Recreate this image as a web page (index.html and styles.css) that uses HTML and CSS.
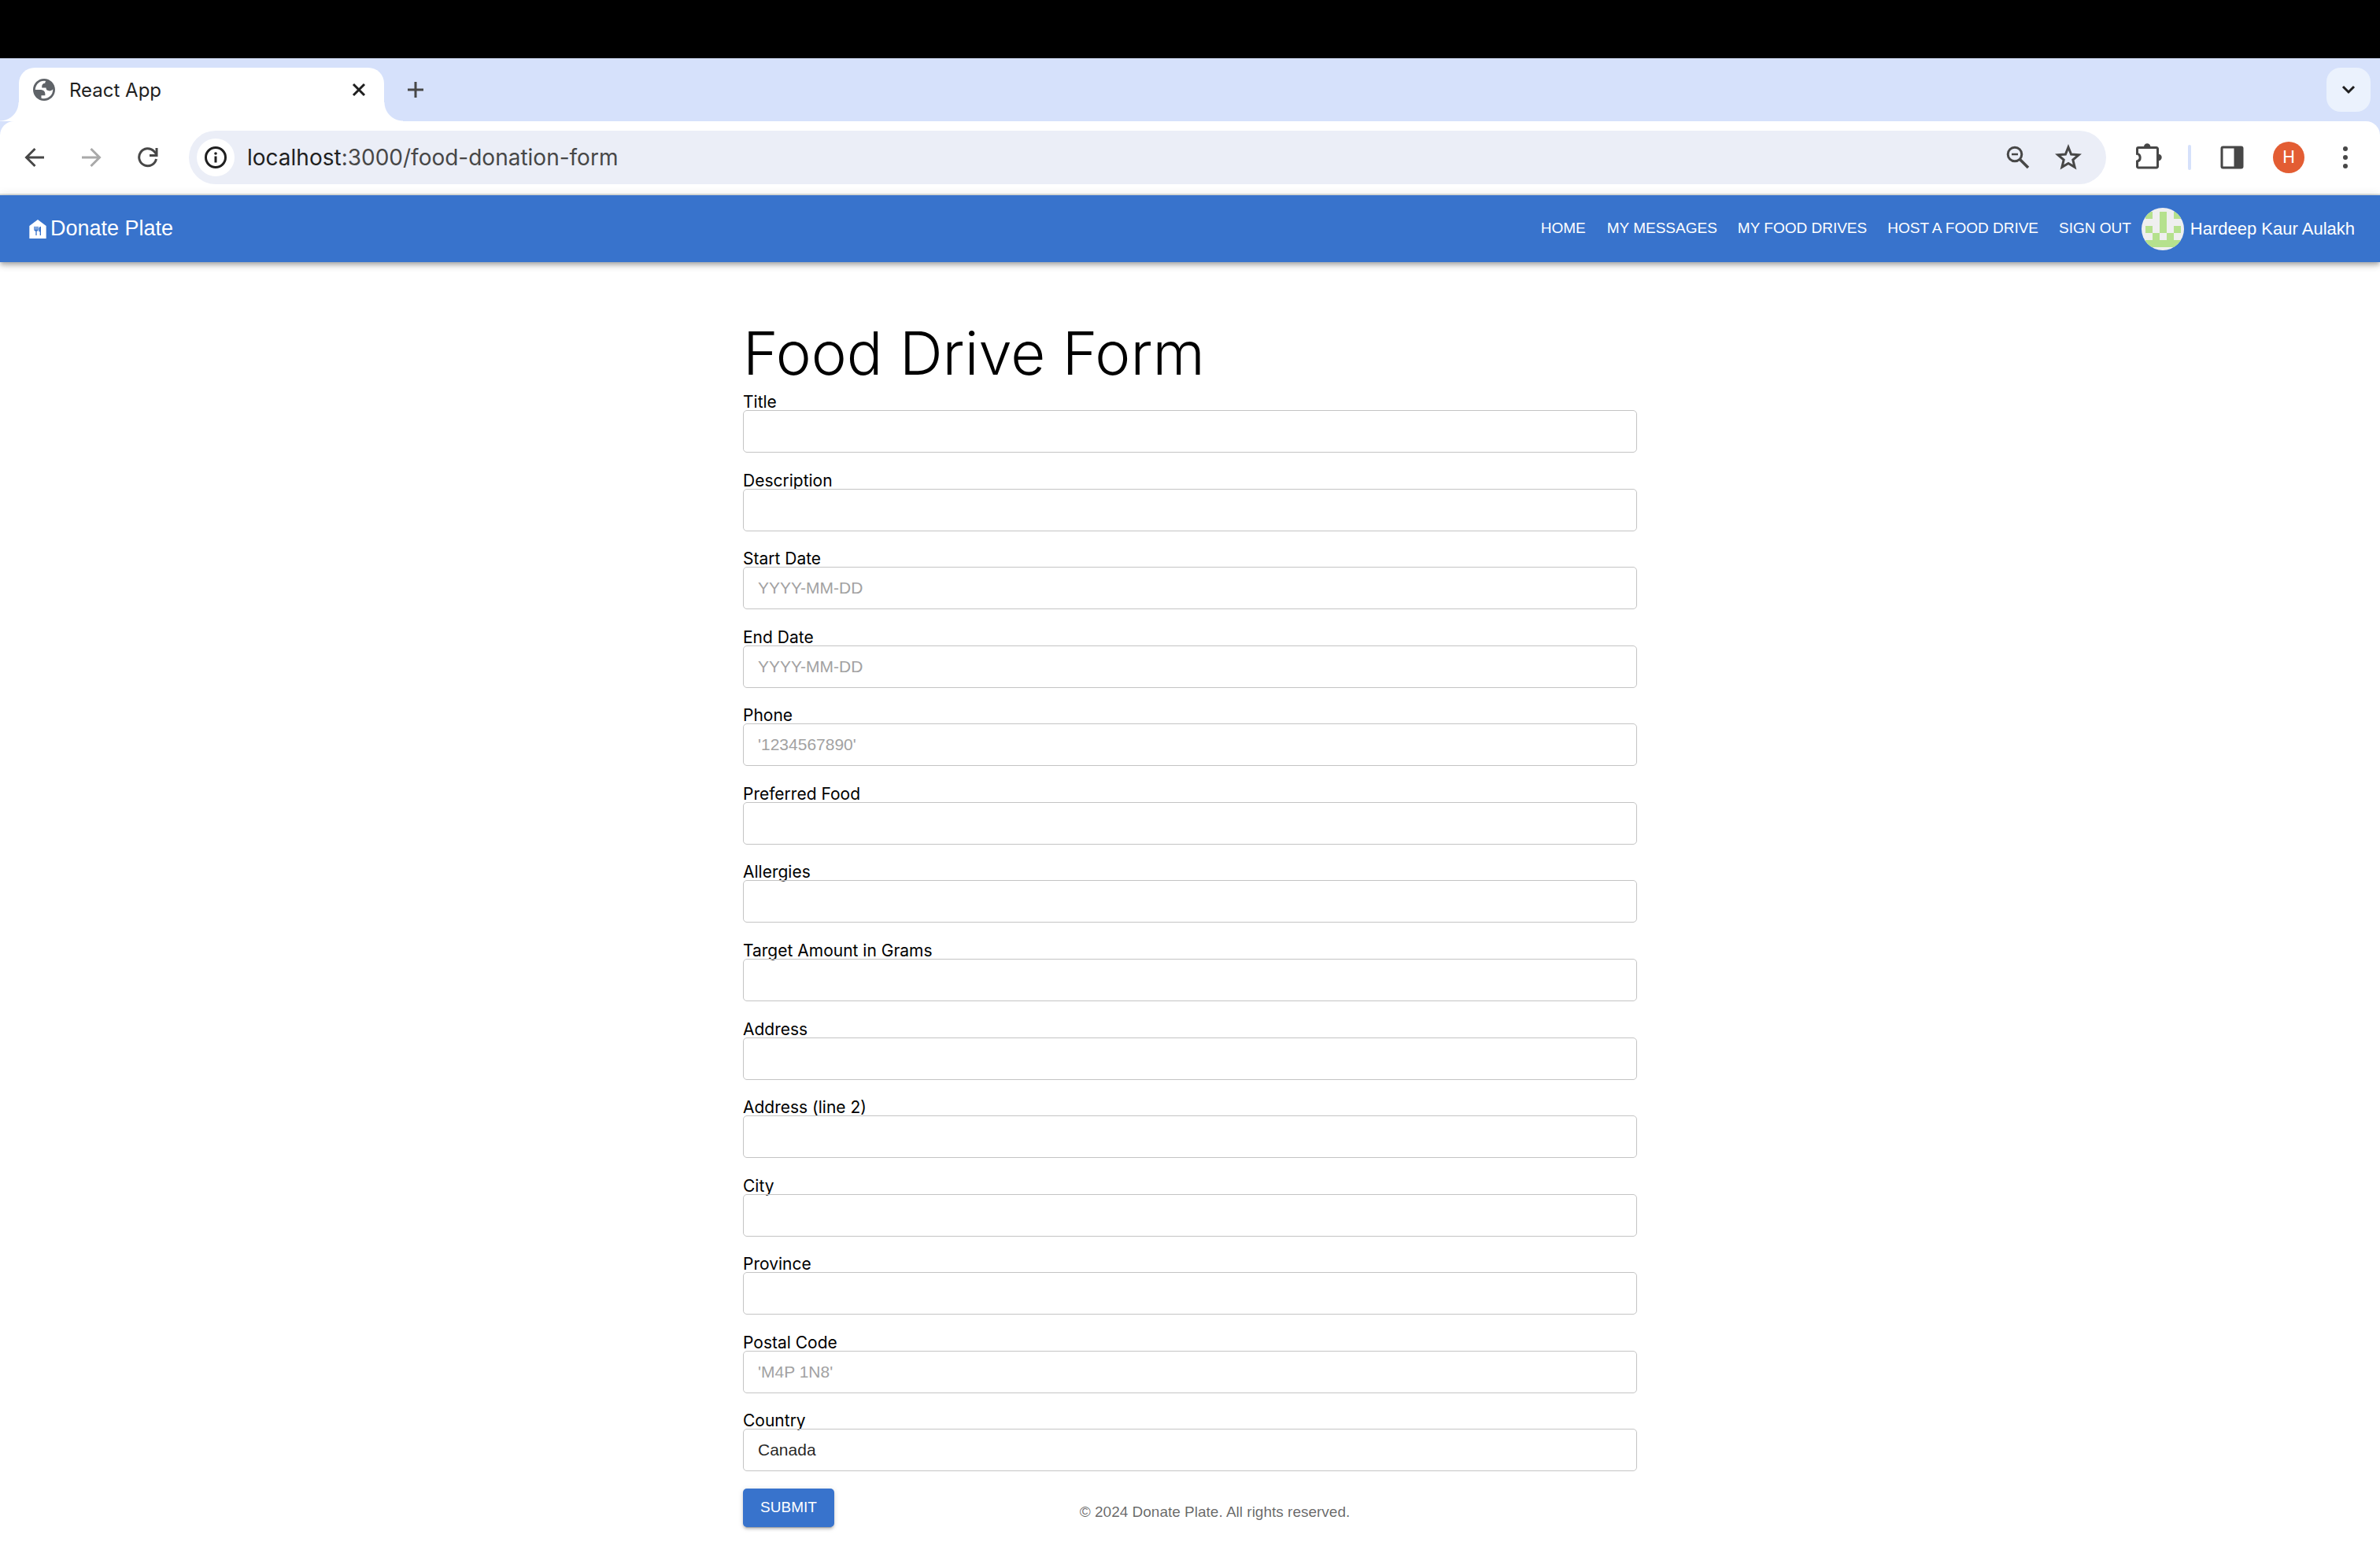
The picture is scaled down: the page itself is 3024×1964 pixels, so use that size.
FILE: index.html
```
<!DOCTYPE html>
<html lang="en">
<head>
<meta charset="utf-8">
<title>React App</title>
<link rel="stylesheet" href="styles.css">
</head>
<body>
<div class="screen-top"></div>
<div class="browser">
  <div class="tab-strip">
    <div class="tab">
      <svg class="tab-favicon" viewBox="2 2 20 20" aria-hidden="true"><path fill="#5f6368" fill-rule="evenodd" d="M12 2C6.480 2 2 6.480 2 12s4.480 10 10 10 10-4.480 10-10S17.520 2 12 2zM4 12h4.400c3.407.022 4.922 1.730 4.543 5.127H9.488v2.470a8.004 8.004 0 0 0 10.498-8.083C19.327 12.504 18.332 13 17 13c-2.137 0-3.206-.916-3.206-2.750h-3.748c-.274-2.728.683-4.092 2.870-4.092 0-.975.327-1.597.811-1.970A8.004 8.004 0 0 0 4 12z"/></svg>
      <span class="tab-title">React App</span>
      <button class="tab-close" aria-label="Close tab"><svg width="18" height="18" viewBox="0 0 18 18"><path d="M2 2l14 14M16 2L2 16" stroke="#1f1f1f" stroke-width="3" fill="none"/></svg></button>
    </div>
    <button class="new-tab" aria-label="New tab"><svg width="20" height="20" viewBox="0 0 20 20"><path d="M10 0v20M0 10h20" stroke="#474747" stroke-width="3"/></svg></button>
    <button class="tab-search" aria-label="Search tabs"><svg width="18" height="12" viewBox="0 0 18 12"><path d="M2 2l7 7 7-7" stroke="#1f1f1f" stroke-width="3" fill="none"/></svg></button>
  </div>
  <div class="toolbar">
    <button class="tool" aria-label="Back"><svg width="26" height="26" viewBox="0 0 26 26"><path d="M25 13H3M13.500 2L2.500 13l11 11" stroke="#474747" stroke-width="3" fill="none"/></svg></button>
    <button class="tool" aria-label="Forward"><svg width="26" height="26" viewBox="0 0 26 26"><path d="M1 13h22M12.500 2l11 11-11 11" stroke="#a9a9a9" stroke-width="3" fill="none"/></svg></button>
    <button class="tool" aria-label="Reload"><svg width="26" height="26" viewBox="0 0 26 26"><path d="M23.500 15A11 11 0 1 1 20.500 5L24 9" stroke="#474747" stroke-width="3" fill="none"/><path d="M25.500 1v11H15V9h7.500V1z" fill="#474747"/></svg></button>
    <div class="omnibox">
      <button class="site-info" aria-label="Site information"><svg width="28" height="28" viewBox="0 0 28 28"><circle cx="14" cy="14" r="12.500" fill="none" stroke="#1f1f1f" stroke-width="3"/><path d="M12.500 12.500h3v8h-3z" fill="#1f1f1f"/><circle cx="14" cy="9" r="1.800" fill="#1f1f1f"/></svg></button>
      <div class="url" role="textbox" aria-label="Address bar" contenteditable="true" spellcheck="false">localhost<span class="url-path">:3000/food-donation-form</span></div>
      <button class="omni-action" aria-label="Zoom"><svg width="30" height="30" viewBox="0 0 30 30"><circle cx="11" cy="11" r="8.800" fill="none" stroke="#474747" stroke-width="3"/><path d="M17 17l11 11" stroke="#474747" stroke-width="3.500"/><path d="M7 11h8" stroke="#474747" stroke-width="2.500"/></svg></button>
      <button class="omni-action" aria-label="Bookmark this page"><svg width="34" height="34" viewBox="0 0 34 34"><path d="M17 4l3.600 9 9.600.7-7.400 6.300 2.300 9.400-8.100-5-8.100 5 2.300-9.400-7.400-6.300 9.600-.7z" fill="none" stroke="#474747" stroke-width="3"/></svg></button>
    </div>
    <button class="tool" aria-label="Extensions"><svg width="36" height="36" viewBox="0 0 36 36"><path d="M5.500 5.500H28a1.500 1.500 0 0 1 1.500 1.500v22.500a1.500 1.500 0 0 1-1.500 1.500H5a1.500 1.500 0 0 1-1.500-1.500v-6.500c2.500-.5 3.700-2.300 3.700-4.800s-1.200-4.300-3.700-4.800V7A1.500 1.500 0 0 1 5 5.500z" fill="none" stroke="#474747" stroke-width="3"/><path d="M12 4.500a4.200 4.200 0 0 1 8.400 0zM30.500 13.800a4.200 4.200 0 0 1 0 8.400z" fill="#474747"/></svg></button>
    <span class="divider"></span>
    <button class="tool" aria-label="Side panel"><svg width="30" height="30" viewBox="0 0 30 30"><rect x="2" y="2" width="26" height="26" rx="1.500" fill="none" stroke="#474747" stroke-width="3"/><path d="M17.500 1.500H28v27H17.500z" fill="#474747"/></svg></button>
    <button class="tool" aria-label="Profile"><span class="profile">H</span></button>
    <button class="tool" aria-label="Menu"><svg width="6" height="28" viewBox="0 0 6 28" fill="#474747"><circle cx="3" cy="3" r="3"/><circle cx="3" cy="14" r="3"/><circle cx="3" cy="25" r="3"/></svg></button>
  </div>
</div>
<header class="app-bar">
  <a class="brand" href="#"><svg width="32" height="32" viewBox="0 0 24 24" fill="#fff" aria-hidden="true"><path d="M12 3 4 9v12h16V9l-8-6zm.500 9.500c0 .83-.67 1.500-1.500 1.500v4h-1v-4c-.83 0-1.500-.67-1.500-1.500v-3h1v3h.500v-3h1v3h.500v-3h1v3zM15 18h-1v-3.500h-1v-3c0-1.100.9-2 2-2V18z"/></svg>Donate Plate</a>
  <nav class="nav">
    <a class="nav-link" href="#">HOME</a>
    <a class="nav-link" href="#">MY MESSAGES</a>
    <a class="nav-link" href="#">MY FOOD DRIVES</a>
    <a class="nav-link" href="#">HOST A FOOD DRIVE</a>
    <a class="nav-link" href="#">SIGN OUT</a>
  </nav>
  <svg class="avatar" viewBox="0 0 12 12" shape-rendering="crispEdges" aria-hidden="true"><path d="M0 0h12v12H0z" fill="#efefef"/><path d="M1 1h2v2H1zM5 1h2v6H5zM9 1h2v2H9zM1 5h2v2H1zM9 5h2v2H9zM3 7h2v2H3zM7 7h2v2H7zM1 9h10v2H1z" fill="#b5e18d"/></svg>
  <span class="user-name">Hardeep Kaur Aulakh</span>
</header>
<main class="container">
  <h1 class="heading">Food Drive Form</h1>
  <form class="form">
    <div class="field"><label for="title">Title</label><input id="title" type="text"></div>
    <div class="field"><label for="description">Description</label><input id="description" type="text"></div>
    <div class="field"><label for="start">Start Date</label><input id="start" type="text" placeholder="YYYY-MM-DD"></div>
    <div class="field"><label for="end">End Date</label><input id="end" type="text" placeholder="YYYY-MM-DD"></div>
    <div class="field"><label for="phone">Phone</label><input id="phone" type="text" placeholder="'1234567890'"></div>
    <div class="field"><label for="food">Preferred Food</label><input id="food" type="text"></div>
    <div class="field"><label for="allergies">Allergies</label><input id="allergies" type="text"></div>
    <div class="field"><label for="target">Target Amount in Grams</label><input id="target" type="text"></div>
    <div class="field"><label for="address">Address</label><input id="address" type="text"></div>
    <div class="field"><label for="address2">Address (line 2)</label><input id="address2" type="text"></div>
    <div class="field"><label for="city">City</label><input id="city" type="text"></div>
    <div class="field"><label for="province">Province</label><input id="province" type="text"></div>
    <div class="field"><label for="postal">Postal Code</label><input id="postal" type="text" placeholder="'M4P 1N8'"></div>
    <div class="field"><label for="country">Country</label><input id="country" type="text" value="Canada"></div>
    <div class="form-end">
      <button class="submit" type="submit">SUBMIT</button>
      <p class="copyright">© 2024 Donate Plate. All rights reserved.</p>
    </div>
  </form>
</main>
</body>
</html>
```
FILE: styles.css
```
* { box-sizing: border-box; }

body {
  margin: 0;
  min-height: 100vh;
  display: flex;
  flex-direction: column;
  background: #fff;
  font-family: "Liberation Sans", Arial, sans-serif;
}

button {
  margin: 0;
  padding: 0;
  border: 0;
  background: none;
  font: inherit;
}

svg { display: block; }

/* Browser window */
.screen-top { height: 74px; background: #000; }

.browser {
  background: #d6e1fb;
  font-family: Inter, sans-serif;
  border-bottom: 2px solid #e0e3e1;
}

.tab-strip {
  height: 80px;
  display: flex;
  align-items: center;
  padding: 0 12px 0 24px;
}

.tab {
  position: relative;
  align-self: flex-end;
  width: 464px;
  height: 68px;
  padding: 0 21px 12px 18px;
  display: flex;
  align-items: center;
  background: #fff;
  border-radius: 20px 20px 0 0;
}

.tab::before,
.tab::after {
  content: "";
  position: absolute;
  bottom: 0;
  width: 24px;
  height: 24px;
}

.tab::before {
  right: 100%;
  background: radial-gradient(circle at 0 0, transparent 23px, #fff 24px);
}

.tab::after {
  left: 100%;
  background: radial-gradient(circle at 100% 0, transparent 23px, #fff 24px);
}

.tab-favicon { width: 28px; height: 28px; }

.tab-title {
  flex: 1;
  margin-left: 18px;
  font-size: 24px;
  color: #1f1f1f;
}

.tab-close { padding: 2px; }

.new-tab { padding: 20px 30px; }

.tab-search {
  display: grid;
  place-items: center;
  width: 56px;
  height: 56px;
  margin-left: auto;
  border-radius: 18px;
  background: #ebf2fd;
}

.toolbar {
  height: 92px;
  padding: 0 8px;
  display: flex;
  align-items: center;
  background: #fff;
  border-radius: 18px 18px 0 0;
}

.tool {
  width: 72px;
  height: 68px;
  display: grid;
  place-items: center;
}

.omnibox {
  flex: 1;
  height: 68px;
  margin: 0 18px 0 16px;
  padding: 0 16px 0 10px;
  display: flex;
  align-items: center;
  border-radius: 34px;
  background: #ebeef7;
}

.site-info {
  display: grid;
  place-items: center;
  width: 48px;
  height: 48px;
  border-radius: 50%;
  background: #fff;
}

.url {
  flex: 1;
  margin-left: 16px;
  font-size: 28px;
  color: #1f1f1f;
}

.url-path { color: #474747; }

.omni-action {
  width: 64px;
  height: 64px;
  display: grid;
  place-items: center;
}

.divider {
  width: 4px;
  height: 32px;
  margin: 0 16px 0 14px;
  border-radius: 2px;
  background: #d6e1fb;
}

.profile {
  width: 40px;
  height: 40px;
  border-radius: 50%;
  background: #e35d33;
  color: #fff;
  font: 22px/40px Roboto, sans-serif;
}

/* App bar */
.app-bar {
  height: 85px;
  padding: 0 32px;
  display: flex;
  align-items: center;
  background: #3873cc;
  color: #fff;
  box-shadow: 0 3px 5px -1px rgba(0, 0, 0, .2), 0 5px 7px rgba(0, 0, 0, .14), 0 1px 13px rgba(0, 0, 0, .12);
}

.brand {
  display: flex;
  align-items: center;
  color: #fff;
  font-size: 27px;
  text-decoration: none;
}

.nav { display: flex; margin-left: auto; }

.nav-link {
  min-width: 85px;
  padding: 8px 13px 10px;
  color: #fff;
  font-size: 19px;
  text-align: center;
  text-decoration: none;
}

.avatar { width: 54px; height: 54px; border-radius: 50%; }

.user-name { margin-left: 8px; font-size: 22px; }

/* Food drive form */
.container {
  flex: 1;
  width: 100%;
  max-width: 1200px;
  margin: 0 auto;
  padding: 66px 32px 24px;
  display: flex;
  flex-direction: column;
}

.heading {
  margin: 0;
  font-family: Inter, sans-serif;
  font-size: 76px;
  font-weight: 300;
  line-height: 98px;
}

.form {
  flex: 1;
  display: flex;
  flex-direction: column;
  justify-content: space-between;
}

.field {
  display: flex;
  flex-direction: column;
  padding-top: 4px;
}

.field label {
  font-family: Inter, sans-serif;
  font-size: 21px;
  line-height: 20px;
}

.field input {
  height: 54px;
  padding: 0 18px;
  border: 1px solid #c4c4c4;
  border-radius: 5px;
  background: transparent;
  color: rgba(0, 0, 0, .87);
  font-family: inherit;
  font-size: 21px;
}

.field input::placeholder { color: #a2a2a2; }

.form-end { display: flex; align-items: flex-end; }

.submit {
  width: 116px;
  height: 49px;
  border-radius: 5px;
  background: #3873cc;
  color: #fff;
  font-size: 19px;
  box-shadow: 0 4px 1px -3px rgba(0, 0, 0, .2), 0 3px 3px rgba(0, 0, 0, .14), 0 1px 7px rgba(0, 0, 0, .12);
}

.copyright {
  flex: 1;
  margin: 0 53px 0 0;
  color: rgba(0, 0, 0, .6);
  font-size: 19px;
  line-height: 38px;
  text-align: center;
}
```
